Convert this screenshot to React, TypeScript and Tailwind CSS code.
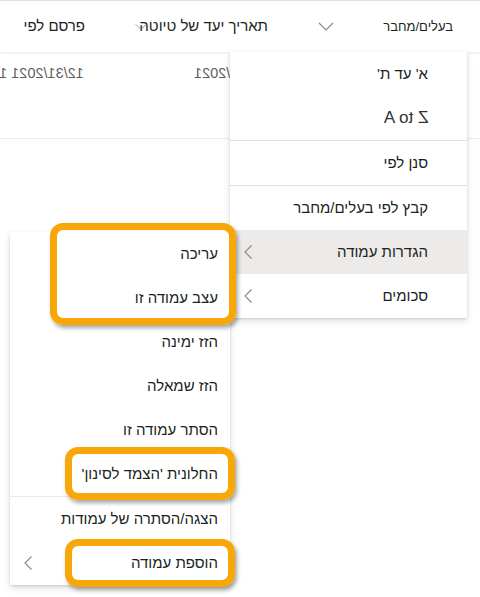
import React from "react";

function ChevronLeft({ className = "" }: { className?: string }) {
  return (
    <svg width="10" height="16" viewBox="0 0 10 16" className={className} fill="none">
      <path d="M8.5 1.5 L2 8 L8.5 14.5" stroke="#8a8886" strokeWidth="1.1" />
    </svg>
  );
}

function ChevronDown({ className = "" }: { className?: string }) {
  return (
    <svg width="16" height="9" viewBox="0 0 16 9" className={className} fill="none">
      <path d="M1 1 L8 8 L15 1" stroke="#8a8886" strokeWidth="1.1" />
    </svg>
  );
}

const MenuItem = ({
  children,
  chevron,
  active,
  pr,
}: {
  children: React.ReactNode;
  chevron?: boolean;
  active?: boolean;
  pr: string;
}) => (
  <div
    className={`h-[44px] flex items-center ${pr} pl-[13px] text-[15px] text-[#201f1e] whitespace-nowrap ${
      active ? "bg-[#edebe9]" : ""
    }`}
  >
    <span>{children}</span>
    {chevron && <ChevronLeft className="mr-auto" />}
  </div>
);

export default function App() {
  return (
    <div
      dir="rtl"
      className="relative w-[480px] h-[597px] overflow-hidden bg-white font-['Liberation_Sans','DejaVu_Sans',sans-serif]"
    >
      {/* Header */}
      <div className="relative z-10 h-[52px] border-t border-[#e1dfdd] flex bg-white shadow-[0_1px_3px_rgba(0,0,0,0.10)]">
        <div className="w-[180px] shrink-0 flex items-center pr-[27px] pl-[18px] text-[13px] text-[#201f1e]">
          <span className="whitespace-nowrap">בעלים/מחבר</span>
          <ChevronDown className="mr-auto" />
        </div>
        <div className="relative w-[205px] shrink-0 flex items-center pr-[32px] text-[15px] text-[#201f1e]">
          <span className="whitespace-nowrap">תאריך יעד של טיוטה</span>
          <ChevronDown className="absolute left-[40px] top-[22px] w-[12px] h-[8px]" />
        </div>
        <div className="flex-1 min-w-0 flex items-center pr-[10px] text-[15px] text-[#201f1e]">
          <span className="whitespace-nowrap">פרסם לפי</span>
        </div>
      </div>

      {/* Data row */}
      <div className="h-[87px] flex border-b border-[#edebe9]">
        <div className="w-[180px] shrink-0" />
        <div className="w-[205px] shrink-0 pr-[33px] pt-[11px] text-[14.5px] text-[#605e5c]">
          <span dir="ltr" className="inline-block -scale-x-100 whitespace-nowrap">
            12/31/2021
          </span>
        </div>
        <div className="flex-1 min-w-0 overflow-hidden pr-[11px] pt-[11px] text-[14.5px] text-[#605e5c] whitespace-nowrap">
          <span dir="ltr" className="inline-block -scale-x-100 whitespace-nowrap">
            12/31/2021 11:00 AM
          </span>
        </div>
      </div>

      {/* Main context menu */}
      <div className="absolute z-20 left-[230px] top-[52px] w-[237px] bg-white shadow-[0_3px_7px_rgba(0,0,0,0.13),0_1px_2px_rgba(0,0,0,0.11)]">
        <MenuItem pr="pr-[39px]">א' עד ת'</MenuItem>
        <MenuItem pr="pr-[39px]">
          <span dir="ltr" className="inline-block -scale-x-100 text-[17px] text-[#323130]">
            Z to A
          </span>
        </MenuItem>
        <div className="h-px bg-[#e1dfdd]" />
        <MenuItem pr="pr-[39px]">סנן לפי</MenuItem>
        <div className="h-px bg-[#e1dfdd]" />
        <MenuItem pr="pr-[39px]">קבץ לפי בעלים/מחבר</MenuItem>
        <MenuItem pr="pr-[39px]" chevron active>
          הגדרות עמודה
        </MenuItem>
        <MenuItem pr="pr-[39px]" chevron>
          סכומים
        </MenuItem>
      </div>

      {/* Submenu */}
      <div className="absolute z-30 left-[10px] top-[232px] w-[220px] bg-white shadow-[0_3px_7px_rgba(0,0,0,0.13),0_1px_2px_rgba(0,0,0,0.11)]">
        <MenuItem pr="pr-[12px]">עריכה</MenuItem>
        <MenuItem pr="pr-[12px]">עצב עמודה זו</MenuItem>
        <MenuItem pr="pr-[12px]">הזז ימינה</MenuItem>
        <MenuItem pr="pr-[12px]">הזז שמאלה</MenuItem>
        <MenuItem pr="pr-[12px]">הסתר עמודה זו</MenuItem>
        <MenuItem pr="pr-[12px]">החלונית 'הצמד לסינון'</MenuItem>
        <div className="h-px bg-[#edebe9]" />
        <MenuItem pr="pr-[12px]">הצגה/הסתרה של עמודות</MenuItem>
        <MenuItem pr="pr-[12px]" chevron>
          הוספת עמודה
        </MenuItem>
      </div>

      {/* Highlight boxes */}
      <div className="absolute z-40 left-[50px] top-[223px] w-[186px] h-[102px] border-[7px] border-[#f7a707] rounded-[13px] shadow-[2px_3px_4px_rgba(0,0,0,0.35)]" />
      <div className="absolute z-40 left-[65px] top-[447px] w-[170px] h-[53px] border-[7px] border-[#f7a707] rounded-[13px] shadow-[2px_3px_4px_rgba(0,0,0,0.35)]" />
      <div className="absolute z-40 left-[65px] top-[539px] w-[170px] h-[48px] border-[7px] border-[#f7a707] rounded-[13px] shadow-[2px_3px_4px_rgba(0,0,0,0.35)]" />
    </div>
  );
}
